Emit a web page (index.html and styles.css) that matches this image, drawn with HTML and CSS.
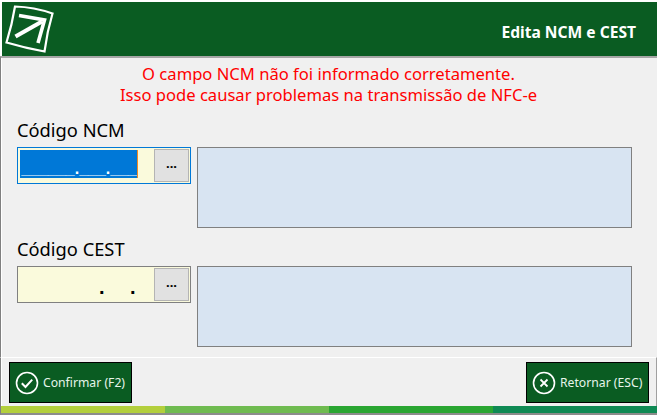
FILE: index.html
```html
<!DOCTYPE html>
<html lang="pt-BR">
<head>
    <meta charset="UTF-8">
    <title>Edita NCM e CEST</title>
    <link rel="stylesheet" href="styles.css">
</head>
<body>
<div class="window">
    <header class="title-bar">
        <svg class="logo" width="58" height="54" viewBox="0 2 58 54" fill="none" stroke="#fff">
            <path d="M15 6.5 Q34 7 52.5 13.5 Q47 32 44.5 51.5 Q25 48 6.5 42.5 Q12 25 15 6.5Z" stroke-width="2.2"/>
            <path d="M19 15.5 L44.5 20 L38 43" stroke-width="3.6"/>
            <path d="M15.5 36.5 L42 21.5" stroke-width="4.2"/>
        </svg>
        <h1 class="title">Edita NCM e CEST</h1>
    </header>

    <main class="content">
        <p class="warning">O campo NCM não foi informado corretamente.<br>Isso pode causar problemas na transmissão de NFC-e</p>

        <section class="field field-ncm">
            <label class="field-label">Código NCM</label>
            <div class="field-row">
                <div class="input-box input-box-focus">
                    <div class="mask mask-selected"><span class="selection">______.___.___</span></div>
                    <button class="btn-dots">...</button>
                </div>
                <div class="desc-box"></div>
            </div>
        </section>

        <section class="field field-cest">
            <label class="field-label">Código CEST</label>
            <div class="field-row">
                <div class="input-box">
                    <div class="mask"><span class="mask-dots">..</span></div>
                    <button class="btn-dots">...</button>
                </div>
                <div class="desc-box"></div>
            </div>
        </section>
    </main>

    <footer class="actions">
        <button class="btn-action">
            <svg width="24" height="24" viewBox="0 0 24 24" fill="none" stroke="#fff"><circle cx="12" cy="12" r="10.5" stroke-width="1.6"/><path d="M6.8 12.2 L10.5 16 L17.2 8.6" stroke-width="2"/></svg>
            Confirmar (F2)
        </button>
        <button class="btn-action">
            <svg width="24" height="24" viewBox="0 0 24 24" fill="none" stroke="#fff"><circle cx="12" cy="12" r="10.5" stroke-width="1.6"/><path d="M8.5 8.5 L15.5 15.5 M15.5 8.5 L8.5 15.5" stroke-width="1.8"/></svg>
            Retornar (ESC)
        </button>
    </footer>

    <div class="color-bar">
        <i class="bar-lime"></i><i class="bar-light"></i><i class="bar-green"></i><i class="bar-teal"></i>
    </div>
</div>
</body>
</html>
```

FILE: styles.css
```css
* {
    box-sizing: border-box;
}
html, body {
    margin: 0;
    height: 100%;
}
body {
    background-color: #fff;
    font-family: "Noto Sans", "Open Sans", sans-serif;
    color: #000;
    overflow: hidden;
}
.window {
    display: flex;
    flex-direction: column;
    width: 657px;
    height: 415px;
}
.title-bar {
    display: flex;
    align-items: center;
    justify-content: space-between;
    height: 54px;
    margin: 2px 0 0 2px;
    padding-right: 21px;
    background-color: #0a5c22;
    flex: none;
}
.logo {
    margin-left: -2px;
}
.title {
    margin: 6px 0 0;
    font-size: 15.6px;
    font-weight: 700;
    color: #fff;
}

.content {
    flex: none;
    height: 301px;
    padding: 5px 25px 0 16px;
    border-top: 2px solid #a6a6a6;
    border-left: 1px solid #808080;
    box-shadow: inset 1px 0 #fff;
    background-color: #f0f0f0;
}
.warning {
    margin: 0;
    padding-left: 8px;
    font-size: 16.6px;
    line-height: 21px;
    text-align: center;
    color: #f00;
}
.field-label {
    display: block;
    font-size: 18.3px;
    line-height: 24px;
}
.field-ncm {
    margin-top: 13px;
}
.field-cest {
    margin-top: 9px;
}
.field-row {
    display: flex;
    gap: 6px;
    margin-top: 5px;
    align-items: flex-start;
}
.input-box {
    display: flex;
    width: 174px;
    height: 37px;
    padding: 1px;
    border: 1px solid #808080;
    background-color: #fafadc;
}
.input-box-focus {
    border-color: #0078d7;
}
.mask {
    display: flex;
    justify-content: flex-end;
    flex: 1;
    font-family: "Liberation Sans", sans-serif;
}
.mask-selected {
    padding: 1px 16px 0 0;
}
.selection {
    width: 118px;
    height: 28px;
    border-right: 1px solid #f08a24;
    background-color: #0078d7;
    color: #fff;
    font-size: 16px;
    font-weight: 700;
    line-height: 37px;
    text-align: right;
    white-space: nowrap;
    overflow: hidden;
}
.mask-dots {
    padding-right: 2px;
    font-size: 20px;
    font-weight: 700;
    line-height: 38px;
    letter-spacing: 25.5px;
    margin-right: -9px;
}
.btn-dots {
    width: 35px;
    height: 33px;
    padding: 0 0 6px;
    border: 1px solid #b4b4b4;
    background-color: #e1e1e1;
    font-family: "Noto Sans", sans-serif;
    font-size: 13px;
    font-weight: 700;
    color: #000;
}
.desc-box {
    width: 435px;
    height: 81px;
    border: 1px solid #808080;
    background-color: #d8e4f2;
}

.actions {
    display: flex;
    justify-content: space-between;
    flex: none;
    height: 49px;
    padding: 4px 7px 0 8px;
    border-top: 1px solid #fff;
    border-left: 1px solid #808080;
    border-right: 1px solid #a0a0a0;
    box-shadow: inset 1px 0 #fff;
    background-color: #f0f0f0;
}
.btn-action {
    display: flex;
    align-items: center;
    gap: 4px;
    width: 123px;
    height: 41px;
    padding: 0 0 0 5px;
    border: 1px solid #000;
    background-color: #0a5c22;
    color: #e6f5ea;
    font-family: "Noto Sans", sans-serif;
    font-size: 12.2px;
    white-space: nowrap;
}
.color-bar {
    display: flex;
    flex: none;
    height: 9px;
    border-bottom: 2px solid #8c8c8c;
    border-left: 1px solid #808080;
    box-shadow: inset 1px 0 #fff;
}
.color-bar i {
    flex: 1;
}
.bar-lime {
    background-color: #b3cf3c;
}
.bar-light {
    background-color: #6fbb50;
}
.bar-green {
    background-color: #2aa632;
}
.bar-teal {
    background-color: #0f8a54;
}
```
